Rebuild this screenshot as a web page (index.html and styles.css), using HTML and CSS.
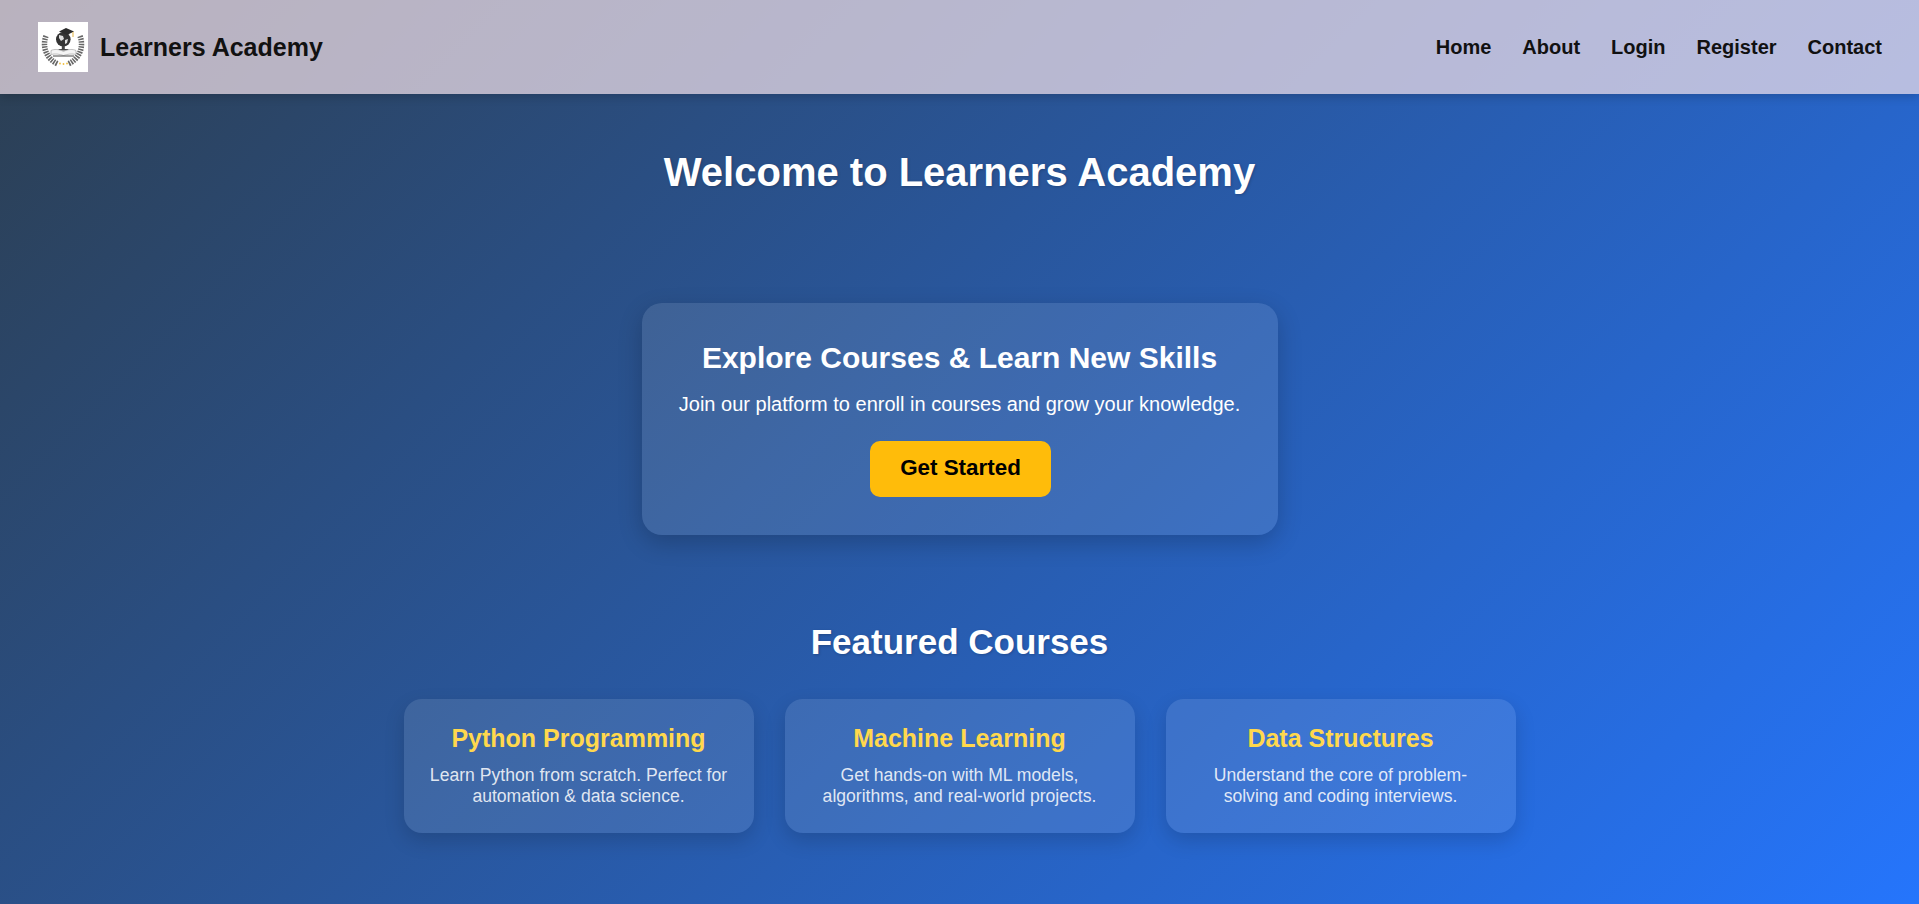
FILE: index.html
```html
<!DOCTYPE html>
<html lang="en">
<head>
<meta charset="utf-8">
<title>Learners Academy</title>
<link rel="stylesheet" href="styles.css">
</head>
<body>
<header class="navbar">
  <a class="brand" href="#">
    <svg class="logo" viewBox="0 0 50 50" aria-hidden="true">
      <rect width="50" height="50" fill="#fff"/>
      <g fill="none" stroke="#666" stroke-width="5.500" stroke-dasharray="1.600 1">
        <path d="M8 14C4 24 8 37 20 42"/>
        <path d="M42 14C46 24 42 37 30 42"/>
      </g>
      <circle cx="25.300" cy="17.300" r="7.300" fill="#333"/>
      <path d="M21 13l4 1 1 3-3 2-2-3zM27 18l3-1-1 4-2 1z" fill="#ddd"/>
      <path d="M21 9.500l7-3.500 8 3.500-7 3.500z" fill="#2a2a2a"/>
      <path d="M35 10v5" stroke="#e3b341" stroke-width="1"/>
      <rect x="23.800" y="24" width="3" height="3.500" fill="#444"/>
      <path d="M20.500 27h10v1.500h-10z" fill="#444"/>
      <path d="M25.500 29.500C21 27 16 27 13 28.500v4C17 31.500 21 32 25.500 33.500C30 32 34 31.500 38 32.500v-4C35 27 30 27 25.500 29.500z" fill="#f4f4f4" stroke="#999" stroke-width=".6"/>
      <path d="M15 34h21" stroke="#444" stroke-width="1"/>
      <g fill="#f0c040">
        <circle cx="22" cy="41.500" r=".9"/><circle cx="25.500" cy="42" r=".9"/><circle cx="29" cy="41.500" r=".9"/>
      </g>
    </svg>
    <span class="brand-name">Learners Academy</span>
  </a>
  <nav class="nav-links">
    <a href="#">Home</a>
    <a href="#">About</a>
    <a href="#">Login</a>
    <a href="#">Register</a>
    <a href="#">Contact</a>
  </nav>
</header>

<main class="content">
  <h1 class="page-title">Welcome to Learners Academy</h1>

  <section class="hero">
    <h2>Explore Courses &amp; Learn New Skills</h2>
    <p>Join our platform to enroll in courses and grow your knowledge.</p>
    <a class="cta" href="#">Get Started</a>
  </section>

  <section class="featured">
    <h2 class="featured-title">Featured Courses</h2>
    <div class="course-grid">
      <article class="course">
        <h3>Python Programming</h3>
        <p>Learn Python from scratch. Perfect for automation &amp; data science.</p>
      </article>
      <article class="course">
        <h3>Machine Learning</h3>
        <p>Get hands-on with ML models, algorithms, and real-world projects.</p>
      </article>
      <article class="course">
        <h3>Data Structures</h3>
        <p>Understand the core of problem-solving and coding interviews.</p>
      </article>
    </div>
  </section>
</main>
</body>
</html>
```

FILE: styles.css
```css
* {
  box-sizing: border-box;
}

html,
body {
  margin: 0;
  height: 100%;
}

body {
  min-height: 904px;
  overflow: hidden;
  font-family: "Liberation Sans", Arial, sans-serif;
  color: #fff;
  background: linear-gradient(135deg, #2c3e50, #2575fc);
}

.navbar {
  height: 94px;
  padding: 0 37px 0 38px;
  display: flex;
  align-items: center;
  justify-content: space-between;
  background: rgba(240, 223, 233, 0.72);
  box-shadow: 0 2px 10px rgba(0, 0, 0, 0.2);
}

.brand {
  display: flex;
  align-items: center;
  gap: 12px;
  color: #111;
  text-decoration: none;
}

.logo {
  width: 50px;
  height: 50px;
  display: block;
}

.brand-name {
  font-size: 25px;
  font-weight: 700;
}

.nav-links {
  display: flex;
  gap: 31px;
}

.nav-links a {
  color: #111;
  font-size: 20px;
  font-weight: 700;
  text-decoration: none;
}

.content {
  display: flex;
  flex-direction: column;
  align-items: center;
  text-align: center;
}

.page-title {
  margin: 52px 0 0;
  font-size: 40px;
  line-height: 52px;
  font-weight: 700;
  text-shadow: 1px 1px 3px rgba(0, 0, 0, 0.2);
}

.hero {
  width: 636px;
  height: 232px;
  margin-top: 105px;
  padding: 37px 20px 0;
  border-radius: 20px;
  background: rgba(255, 255, 255, 0.1);
  box-shadow: 0 8px 24px rgba(0, 0, 0, 0.2);
}

.hero h2 {
  margin: 0;
  font-size: 30px;
  line-height: 36px;
  font-weight: 700;
}

.hero p {
  margin: 16px 0 0;
  font-size: 20px;
  line-height: 24px;
}

.cta {
  display: inline-block;
  height: 56px;
  margin: 25px 0 0 2px;
  padding: 0 30px;
  border-radius: 10px;
  background: #ffbc0a;
  color: #000;
  font-size: 22.400px;
  line-height: 54px;
  font-weight: 700;
  text-decoration: none;
}

.featured {
  margin-top: 86px;
}

.featured-title {
  margin: 0;
  font-size: 35px;
  line-height: 42px;
  font-weight: 700;
  text-shadow: 1px 1px 3px rgba(0, 0, 0, 0.2);
}

.course-grid {
  margin-top: 36px;
  display: flex;
  gap: 31px;
}

.course {
  width: 350px;
  height: 134px;
  padding: 24px 24px 0;
  border-radius: 18px;
  background: rgba(255, 255, 255, 0.1);
  box-shadow: 0 8px 20px rgba(0, 0, 0, 0.15);
}

.course h3 {
  margin: 0;
  color: #ffd84d;
  font-size: 25px;
  line-height: 30px;
  font-weight: 700;
}

.course p {
  margin: 12px 0 0;
  color: rgba(255, 255, 255, 0.85);
  font-size: 17.600px;
  line-height: 21px;
}
```
